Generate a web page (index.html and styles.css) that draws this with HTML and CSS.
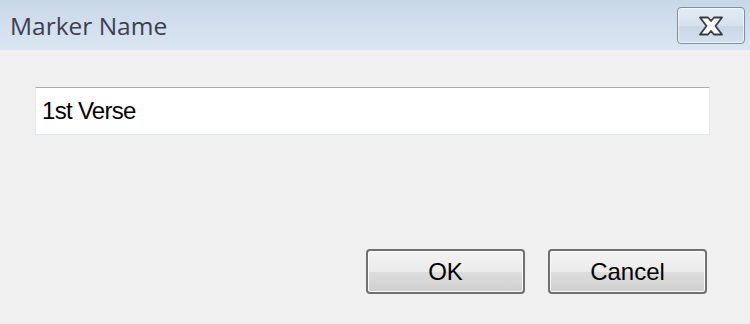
FILE: index.html
```html
<!DOCTYPE html>
<html>
<head>
<meta charset="utf-8">
<link rel="stylesheet" href="styles.css">
</head>
<body>
<div class="dialog">
  <div class="titlebar">
    <span class="title">Marker Name</span>
    <button class="close" aria-label="Close">
      <svg width="28" height="22" viewBox="0 0 28 22">
        <path d="M3 2.5 H11 L14 6 L17 2.5 H25 L18.5 11 L25 19.5 H17 L14 16 L11 19.5 H3 L9.5 11 Z" fill="#fbfbfb" stroke="#383c46" stroke-width="1.8" stroke-linejoin="round"/>
      </svg>
    </button>
  </div>
  <div class="content">
    <div class="field">1st Verse</div>
  </div>
  <div class="actions">
    <button class="btn">OK</button>
    <button class="btn">Cancel</button>
  </div>
</div>
</body>
</html>
```
FILE: styles.css
```css
html, body {
  margin: 0;
  padding: 0;
  width: 750px;
  height: 324px;
  background: #f0f0f0;
  overflow: hidden;
}
.dialog {
  width: 750px;
  height: 324px;
  display: flex;
  flex-direction: column;
  font-family: "Liberation Sans", Arial, sans-serif;
}
.titlebar {
  height: 50px;
  box-sizing: border-box;
  display: flex;
  align-items: flex-start;
  justify-content: space-between;
  background: linear-gradient(#c8d7e8, #dbe6f2);
  padding: 0 5px 0 10px;
}
.title {
  font-family: "Open Sans", "Noto Sans", sans-serif;
  font-size: 24.5px;
  color: #3e3e52;
  line-height: 50px;
  margin-top: 1px;
}
.close {
  margin-top: 7px;
  width: 68px;
  height: 37px;
  box-sizing: border-box;
  border: 1px solid #7f8ea3;
  border-radius: 4px;
  background: linear-gradient(#e4ecf5 0%, #d6e1ee 50%, #c9d6e6 51%, #d4e0ee 100%);
  box-shadow: inset 0 0 0 1px rgba(255,255,255,0.6);
  display: flex;
  align-items: center;
  justify-content: center;
  padding: 0;
}
.content {
  padding: 37px 40px 0 35px;
}
.field {
  height: 48px;
  box-sizing: border-box;
  background: #fff;
  border: 1px solid #e2e8ef;
  border-top-color: #abadb3;
  border-radius: 1px;
  font-size: 24px;
  letter-spacing: -0.7px;
  color: #000;
  line-height: 46px;
  padding-left: 6px;
}
.actions {
  display: flex;
  justify-content: flex-end;
  gap: 23px;
  padding: 114px 43px 0 0;
}
.btn {
  width: 159px;
  height: 45px;
  box-sizing: border-box;
  border: 2px solid #707070;
  border-radius: 4px;
  background: linear-gradient(#f2f2f2 0%, #ebebeb 50%, #dddddd 51%, #cfcfcf 100%);
  box-shadow: inset 0 0 0 1px #fcfcfc;
  font-family: "Liberation Sans", Arial, sans-serif;
  font-size: 24px;
  color: #000;
  padding: 0;
}
```
